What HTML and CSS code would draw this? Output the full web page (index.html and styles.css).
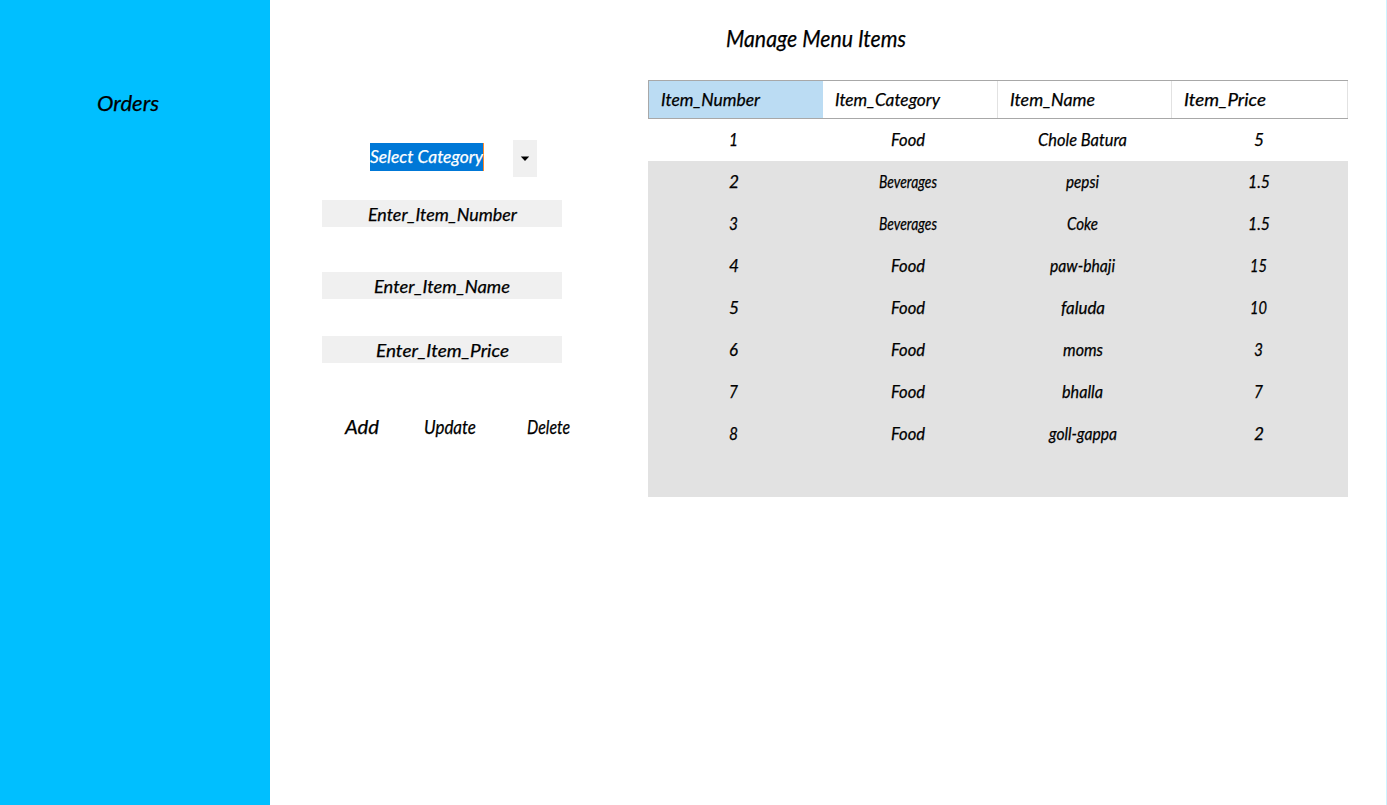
FILE: index.html
```
<!DOCTYPE html>
<html lang="en">
<head>
<meta charset="utf-8">
<title>Manage Menu Items</title>
<link rel="stylesheet" href="styles.css">
</head>
<body>
<div class="app">
  <aside class="sidebar"><a class="nav-link"><span class="script" data-width="62">Orders</span></a></aside>
  <main class="main">
    <h1 class="title"><span class="script" data-width="180">Manage Menu Items</span></h1>
    <div class="content">
      <form class="form">
        <div class="combo">
          <span class="combo-value"><span class="script" data-width="113">Select Category</span></span>
          <span class="combo-arrow"><svg width="10" height="6" viewBox="0 0 10 6"><path d="M.8.5h8.4L5 5z"/></svg></span>
        </div>
        <div class="field field-number"><span class="script" data-width="149">Enter_Item_Number</span></div>
        <div class="field field-name"><span class="script" data-width="136">Enter_Item_Name</span></div>
        <div class="field field-price"><span class="script" data-width="133">Enter_Item_Price</span></div>
        <div class="actions">
          <span class="action"><span class="script" data-width="34">Add</span></span>
          <span class="action"><span class="script" data-width="52">Update</span></span>
          <span class="action"><span class="script" data-width="43">Delete</span></span>
        </div>
      </form>
      <section class="grid">
        <div class="row head">
          <div class="selected"><span class="script" data-width="99">Item_Number</span></div>
          <div><span class="script" data-width="105">Item_Category</span></div>
          <div><span class="script" data-width="85">Item_Name</span></div>
          <div><span class="script" data-width="82">Item_Price</span></div>
        </div>
        <div class="row first"><div><span class="script" data-width="9">1</span></div><div><span class="script" data-width="34">Food</span></div><div><span class="script" data-width="89">Chole Batura</span></div><div><span class="script" data-width="10">5</span></div></div>
        <div class="row"><div><span class="script" data-width="10">2</span></div><div><span class="script" data-width="58">Beverages</span></div><div><span class="script" data-width="33">pepsi</span></div><div><span class="script" data-width="22">1.5</span></div></div>
        <div class="row"><div><span class="script" data-width="9">3</span></div><div><span class="script" data-width="58">Beverages</span></div><div><span class="script" data-width="31">Coke</span></div><div><span class="script" data-width="22">1.5</span></div></div>
        <div class="row"><div><span class="script" data-width="10">4</span></div><div><span class="script" data-width="34">Food</span></div><div><span class="script" data-width="65">paw-bhaji</span></div><div><span class="script" data-width="17">15</span></div></div>
        <div class="row"><div><span class="script" data-width="10">5</span></div><div><span class="script" data-width="34">Food</span></div><div><span class="script" data-width="44">faluda</span></div><div><span class="script" data-width="17">10</span></div></div>
        <div class="row"><div><span class="script" data-width="9">6</span></div><div><span class="script" data-width="34">Food</span></div><div><span class="script" data-width="40">moms</span></div><div><span class="script" data-width="9">3</span></div></div>
        <div class="row"><div><span class="script" data-width="9">7</span></div><div><span class="script" data-width="34">Food</span></div><div><span class="script" data-width="41">bhalla</span></div><div><span class="script" data-width="9">7</span></div></div>
        <div class="row"><div><span class="script" data-width="9">8</span></div><div><span class="script" data-width="34">Food</span></div><div><span class="script" data-width="68">goll-gappa</span></div><div><span class="script" data-width="10">2</span></div></div>
      </section>
    </div>
  </main>
</div>
<script src="script.js"></script>
</body>
</html>
```

FILE: styles.css
```
* { box-sizing: border-box; }
body {
  margin: 0;
  background: #fff;
  color: #000;
  font: italic 400 18px/24px "Rage Italic", "Lato", sans-serif;
  -webkit-text-stroke: 0.25px currentColor;
}
.app { display: flex; height: 805px; overflow: hidden; border-right: 1px solid #cdf3ff; }
.sidebar { flex: none; width: 269.5px; background: #00bfff; padding: 89px 0 0 97px; }
.nav-link { display: block; font-size: 21px; line-height: 28px; }
.main { flex: 1; min-width: 0; }
.title {
  margin: 0;
  height: 80px;
  padding: 22px 0 0 456.5px;
  font-size: 24px;
  font-weight: 400;
  line-height: 32px;
}
.script { display: inline-block; white-space: nowrap; transform-origin: left center; }
.content { display: flex; align-items: flex-start; }
.form { width: 378px; padding: 60px 0 0 52.5px; }
.combo { display: flex; height: 37px; padding-left: 48px; }
.combo-value {
  flex: none;
  width: 114px;
  height: 28px;
  margin: 3px 29px 0 0;
  border-right: 1px solid #ff8728;
  background: #0078d7;
  background-clip: padding-box;
  color: #fff;
  line-height: 27px;
}
.combo-arrow { display: flex; align-items: center; justify-content: center; width: 24px; background: #f0f0f0; }
.field { display: flex; justify-content: center; width: 240px; height: 27px; background: #f0f0f0; line-height: 29px; }
.field-number { margin-top: 23px; }
.field-name { margin-top: 45px; }
.field-price { margin-top: 37px; }
.actions { display: grid; grid-template-columns: 79px 103px 60px; padding: 52px 0 0 23px; font-size: 19px; }
.grid { width: 700.5px; height: 417px; background: #e2e2e2; }
.row { display: grid; grid-template-columns: 174.5px 174.5px 174.5px 1fr; height: 42px; line-height: 41px; }
.row > div { display: flex; justify-content: center; padding-right: 2px; }
.head { height: 39px; border: solid #a8a8a8; border-width: 1px 0 1px 1px; background: #fff; line-height: 37px; }
.head > div { justify-content: flex-start; padding-left: 12px; border-right: 1px solid #e2e2e2; }
.head .selected { background: #bbdcf3; border-right-color: #bbdcf3; }
.first { background: #fff; }
```

FILE: script.js
```
// Fit each label to its designed width with a condensed horizontal scale.
for (const label of document.querySelectorAll(".script")) {
  const width = Number(label.dataset.width);
  const natural = label.getBoundingClientRect().width;
  label.style.width = width + "px";
  label.style.transform = "scaleX(" + width / natural + ")";
}
```
